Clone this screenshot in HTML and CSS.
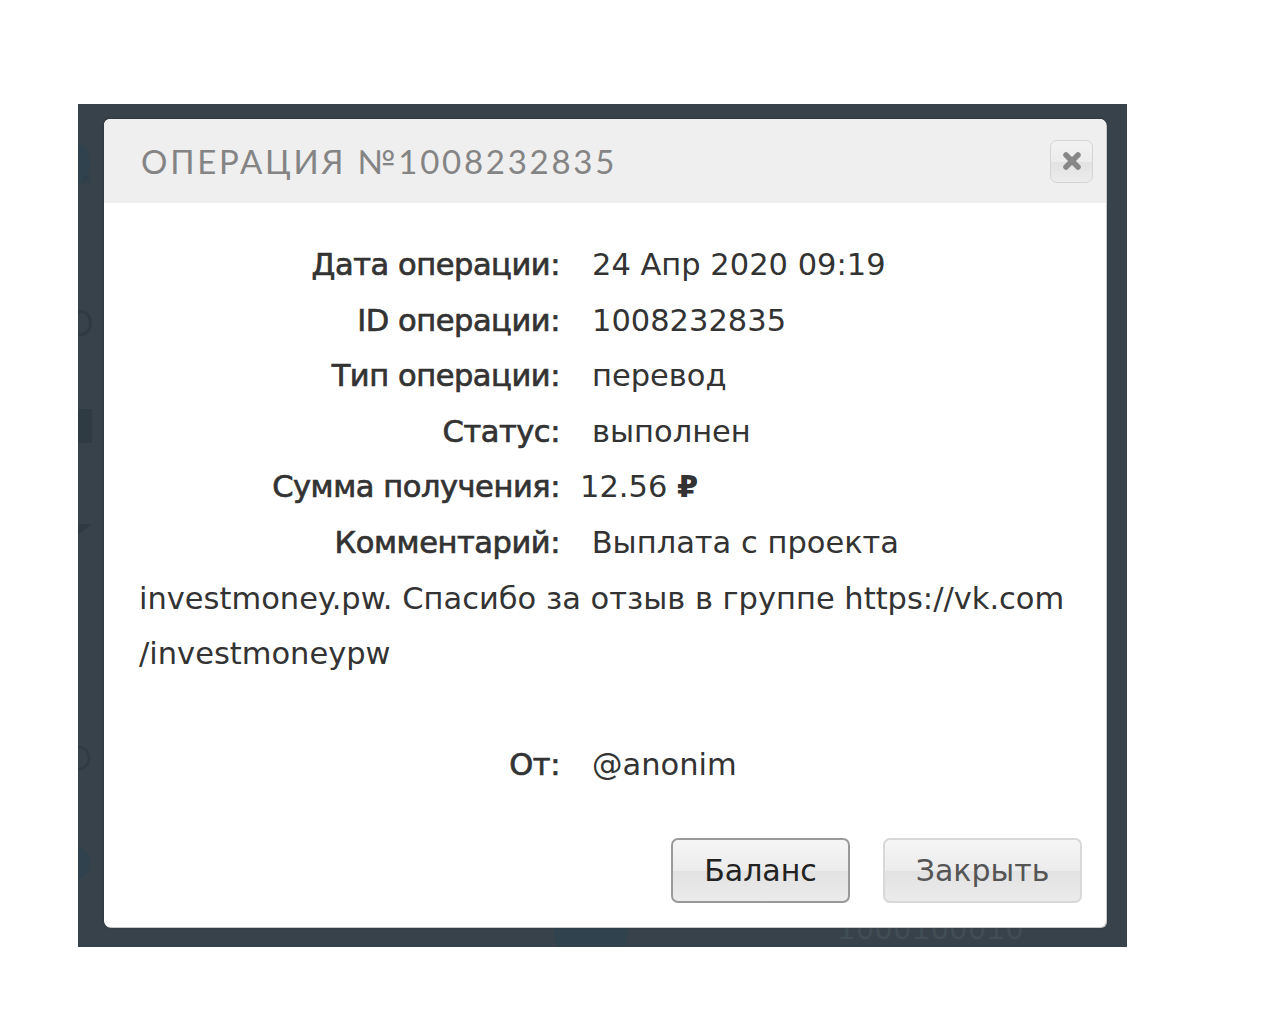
FILE: index.html
```html
<!DOCTYPE html>
<html lang="ru">
<head>
    <meta charset="UTF-8">
    <meta name="viewport" content="width=device-width, initial-scale=1.0">
    <title>Операция №1008232835</title>
    <link rel="stylesheet" href="styles.css">
</head>
<body>
    <div class="backdrop">
        <!-- page behind the overlay, barely visible -->
        <div class="ghost ghost-logo"></div>
        <div class="ghost ghost-reg">®</div>
        <div class="ghost ghost-ring"></div>
        <div class="ghost ghost-square"></div>
        <div class="ghost ghost-wedge"></div>
        <div class="ghost ghost-circle"></div>
        <div class="ghost ghost-dot"></div>
        <div class="ghost ghost-badge"></div>
        <div class="ghost ghost-num">1000100010</div>

        <div class="modal">
            <div class="modal-header">
                <h2 class="modal-title">ОПЕРАЦИЯ №1008232835</h2>
                <button class="close-btn" title="Закрыть">
                    <svg width="22" height="22" viewBox="0 0 22 22">
                        <path d="M5 5 L17 17 M17 5 L5 17" stroke="#878787" stroke-width="5.5" stroke-linecap="round"/>
                    </svg>
                </button>
            </div>

            <div class="modal-body">
                <div class="row"><span class="label">Дата операции:</span><span class="value">24 Апр 2020 09:19</span></div>
                <div class="row"><span class="label">ID операции:</span><span class="value">1008232835</span></div>
                <div class="row"><span class="label">Тип операции:</span><span class="value">перевод</span></div>
                <div class="row"><span class="label">Статус:</span><span class="value">выполнен</span></div>
                <div class="row"><span class="label">Сумма получения:</span><span class="value sum">12.56 <b class="rub">₽</b></span></div>
                <div class="row comment"><span class="label">Комментарий:</span> Выплата с проекта investmoney.pw. Спасибо за отзыв в группе https://vk.com<wbr>/investmoneypw</div>
                <div class="row empty"></div>
                <div class="row"><span class="label">От:</span><span class="value">@anonim</span></div>
            </div>

            <div class="modal-footer">
                <button class="btn btn-primary">Баланс</button>
                <button class="btn">Закрыть</button>
            </div>
        </div>
    </div>
</body>
</html>
```

FILE: styles.css
```css
body {
    margin: 0;
    background: #ffffff;
    font-family: "DejaVu Sans", sans-serif;
}

.backdrop {
    position: relative;
    width: 1049px;
    height: 843px;
    margin: 104px 0 0 78px;
    padding: 15px 0 0 26px;
    box-sizing: border-box;
    background: #37424a;
    overflow: hidden;
}

/* faint page content under the overlay */
.ghost {
    position: absolute;
    opacity: 0.3;
}

.ghost-logo {
    left: -12px;
    top: 40px;
    width: 24px;
    height: 40px;
    border-radius: 50%;
    background: #1d4255;
}

.ghost-reg {
    left: 3px;
    top: 70px;
    font-size: 12px;
    color: #16384a;
}

.ghost-ring {
    left: -8px;
    top: 206px;
    width: 16px;
    height: 20px;
    border: 3px solid #1e2a31;
    border-radius: 50%;
}

.ghost-square {
    left: 0;
    top: 305px;
    width: 14px;
    height: 34px;
    background: #1e2a31;
}

.ghost-wedge {
    left: 0;
    top: 420px;
    width: 0;
    height: 0;
    border-top: 12px solid #1e2a31;
    border-right: 12px solid transparent;
    transform: skewX(-15deg);
}

.ghost-circle {
    left: -10px;
    top: 642px;
    width: 18px;
    height: 20px;
    border: 2px solid #1e2a31;
    border-radius: 50%;
}

.ghost-dot {
    left: -20px;
    top: 742px;
    width: 32px;
    height: 34px;
    border-radius: 50%;
    background: #1d4255;
}

.ghost-badge {
    left: 476px;
    top: 790px;
    width: 74px;
    height: 74px;
    border-radius: 50%;
    background: #1d4255;
}

.ghost-num {
    left: 760px;
    top: 808px;
    font-family: "Liberation Sans", sans-serif;
    font-size: 30px;
    letter-spacing: 2px;
    color: #5b6a73;
}

.modal {
    position: relative;
    width: 1002px;
    height: 808px;
    background: #ffffff;
    border-radius: 6px;
    box-shadow: 1px 1px 0 #c8c8c8, 0 0 3px rgba(0, 0, 0, 0.3);
    display: flex;
    flex-direction: column;
    overflow: hidden;
}

.modal-header {
    height: 84px;
    background: #efefef;
    display: flex;
    align-items: center;
    justify-content: space-between;
    padding: 0 13px 0 37px;
}

.modal-title {
    margin: 0;
    font-family: "Lato", sans-serif;
    font-weight: 400;
    font-size: 33px;
    letter-spacing: 2.75px;
    color: #848484;
}

.close-btn {
    width: 43px;
    height: 43px;
    border: 1px solid #d4d4d4;
    border-radius: 7px;
    background: linear-gradient(#f2f2f2, #ececec 50%, #e2e2e2 51%, #ececec);
    display: flex;
    align-items: center;
    justify-content: center;
    padding: 0;
    cursor: pointer;
}

.modal-body {
    padding: 34px 40px 0 35px;
    font-family: "DejaVu Sans", sans-serif;
    font-size: 30.5px;
    line-height: 55.6px;
    color: #333333;
}

.row {
    min-height: 55.6px;
}

.label {
    display: inline-block;
    width: 421px;
    text-align: right;
    letter-spacing: -0.45px;
    -webkit-text-stroke: 0.7px #333333;
    margin-right: 32px;
}

.comment .label {
    margin-right: 22px;
}

.value.sum {
    margin-left: -12px;
}

.rub {
    font-weight: bold;
}

.modal-footer {
    margin-top: auto;
    display: flex;
    justify-content: flex-end;
    gap: 33px;
    padding: 0 24px 24px 0;
}

.btn {
    width: 199px;
    height: 65px;
    border: 2px solid #d8d8d8;
    border-radius: 7px;
    background: linear-gradient(#f6f6f6, #ececec 50%, #e2e2e2 51%, #ebebeb);
    font-family: "DejaVu Sans", sans-serif;
    font-size: 30px;
    color: #555555;
    cursor: pointer;
}

.btn-primary {
    width: 179px;
    border-color: #9a9a9a;
    color: #222222;
}
```
